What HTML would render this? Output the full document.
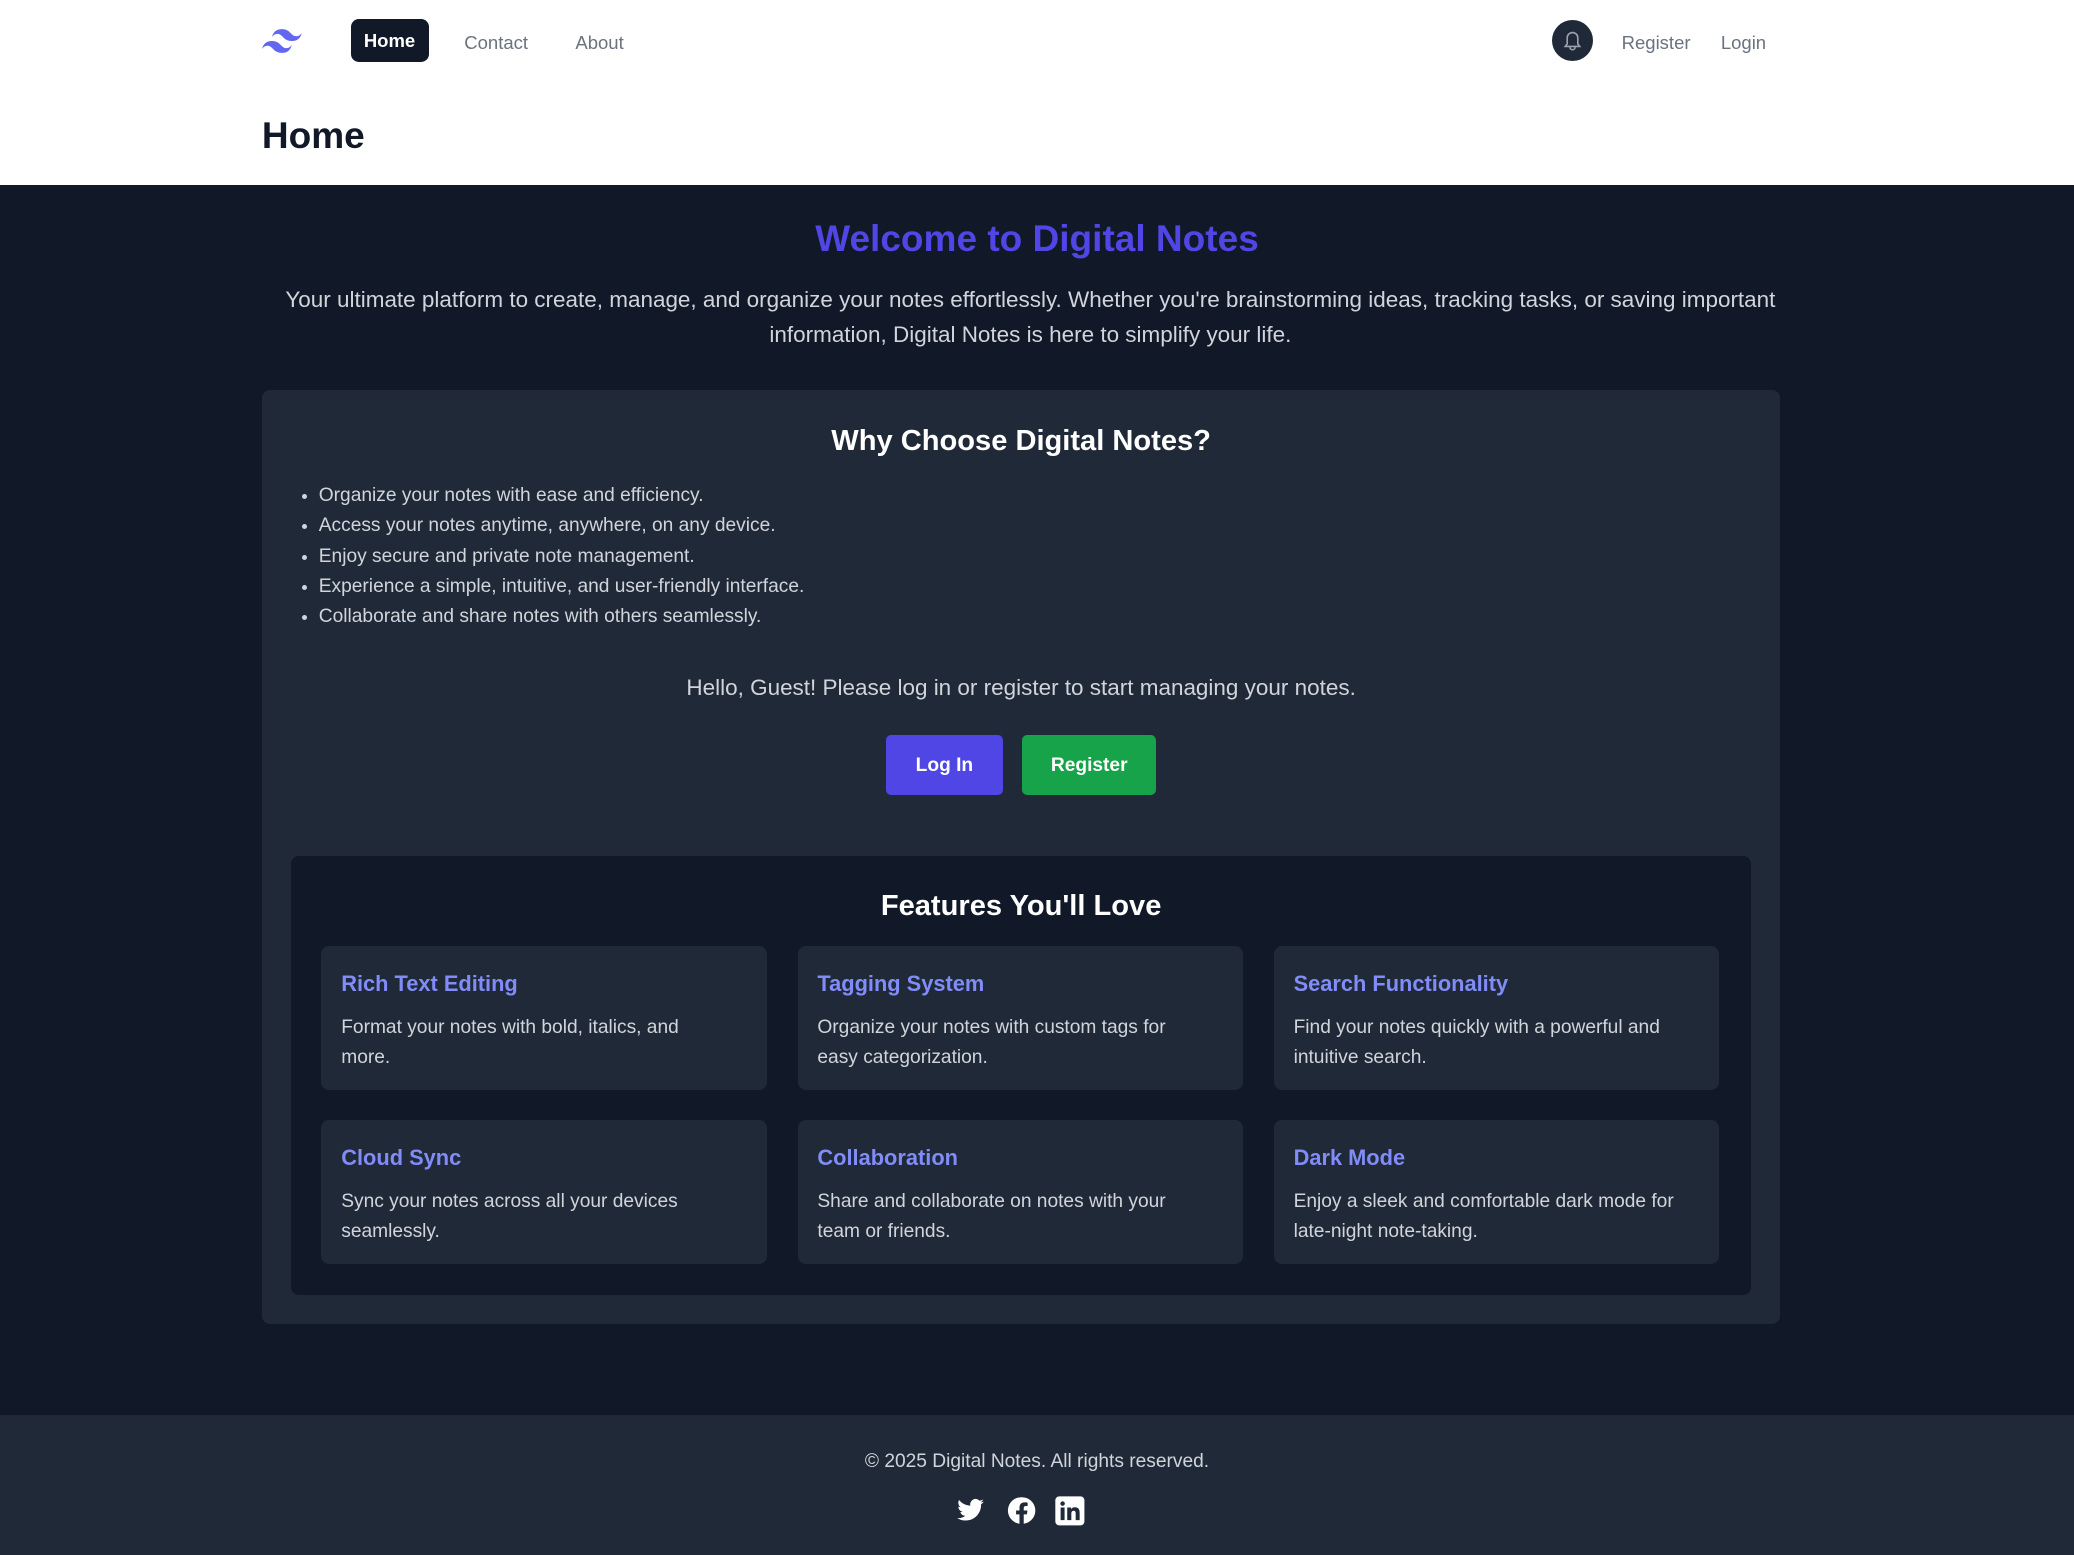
<!DOCTYPE html>
<html><head><meta charset="utf-8"><style>
html{zoom:1.3227}
*{box-sizing:border-box;margin:0;padding:0}
body{width:1568px;font-family:"Liberation Sans",sans-serif;background:#111827;color:#e5e7eb}
.nav{background:#fff;height:64px;position:relative}
.logo{position:absolute;left:198px;top:21px}
.nav a{position:absolute;font-size:14px;color:#6b7280;top:24px}
.home{left:265px;top:14px!important;width:59px;height:33px;background:#111827;color:#fff!important;border-radius:6px;font-weight:bold;text-align:center;line-height:33px}
.hdr{background:#fff;height:76px;position:relative}
.hdr h1{position:absolute;left:198px;top:22px;font-size:28px;color:#111827;font-weight:bold}
.bell{position:absolute;left:1173px;top:15px;width:31px;height:31px;border-radius:50%;background:#1f2937}
main{height:930px;position:relative}
.t{position:absolute;left:0;width:1568px;text-align:center}
.card{position:absolute;left:198px;top:155px;width:1148px;height:706px;background:#1f2937;border-radius:6px}
ul{position:absolute;left:43px;top:69px;font-size:14.5px;line-height:22.7px;color:#d1d5db}
.btn{position:absolute;top:261px;height:45px;line-height:47px;color:#fff;font-weight:bold;font-size:14.5px;text-align:center;border-radius:4px}
.inner{position:absolute;left:22px;top:352px;width:1104px;height:332px;background:#111827;border-radius:6px}
.f{position:absolute;width:337px;height:109px;background:#1f2937;border-radius:6px;padding:19px 30px 16px 15px}
.f h3{font-size:16.5px;color:#818cf8;font-weight:bold;margin-bottom:12px}
.f p{font-size:14.5px;line-height:22.7px;color:#d1d5db}
footer{background:#1f2937;height:106px;position:relative}
</style></head><body>
<div class="nav">
<svg class="logo" width="30" height="20" viewBox="0 0 54 33"><path fill="#6366f1" d="M27 0c-7.2 0-11.7 3.6-13.5 10.8 2.7-3.600 5.85-4.950 9.45-4.050 2.05.51 3.52 2 5.14 3.65C30.7 13.08 33.730 16.2 40.5 16.2c7.2 0 11.7-3.6 13.5-10.8-2.7 3.6-5.85 4.95-9.45 4.05-2.05-.51-3.52-2-5.14-3.65C36.78 3.12 33.77 0 27 0zM13.5 16.2C6.3 16.2 1.8 19.8 0 27c2.7-3.6 5.85-4.95 9.45-4.05 2.05.51 3.52 2 5.14 3.65 2.63 2.68 5.66 5.8 12.41 5.8 7.2 0 11.7-3.6 13.5-10.8-2.7 3.6-5.85 4.95-9.45 4.05-2.05-.51-3.52-2-5.14-3.650-2.63-2.68-5.66-5.8-12.41-5.8z"/></svg>
<a class="home">Home</a><a style="left:351px">Contact</a><a style="left:435px">About</a>
<div class="bell"><svg width="31" height="31" viewBox="0 0 31 31"><path d="M10 20h11l-1.5-2v-4.5a4 4 0 0 0-8 0V18zM13.5 20.5a2 2 0 0 0 4 0" fill="none" stroke="#9ca3af" stroke-width="1.2"/></svg></div>
<a style="left:1226px">Register</a><a style="left:1301px">Login</a>
</div>
<div class="hdr"><h1>Home</h1></div>
<main>
<div class="t" style="top:24px;font-size:28px;font-weight:bold;color:#4f46e5">Welcome to Digital Notes</div>
<div class="t" style="top:73px;font-size:17px;line-height:26.5px;color:#d1d5db;padding:0 200px 0 190px">Your ultimate platform to create, manage, and organize your notes effortlessly. Whether you're brainstorming ideas, tracking tasks, or saving important information, Digital Notes is here to simplify your life.</div>
<div class="card">
<div class="t" style="width:1148px;top:26px;font-size:22px;font-weight:bold;color:#fff">Why Choose Digital Notes?</div>
<ul><li>Organize your notes with ease and efficiency.</li><li>Access your notes anytime, anywhere, on any device.</li><li>Enjoy secure and private note management.</li><li>Experience a simple, intuitive, and user-friendly interface.</li><li>Collaborate and share notes with others seamlessly.</li></ul>
<div class="t" style="width:1148px;top:215px;font-size:17px;color:#d1d5db">Hello, Guest! Please log in or register to start managing your notes.</div>
<div class="btn" style="left:472px;width:88px;background:#4f46e5">Log In</div>
<div class="btn" style="left:575px;width:101px;background:#16a34a">Register</div>
<div class="inner">
<div class="t" style="width:1104px;top:26px;font-size:22px;font-weight:bold;color:#fff">Features You'll Love</div>
<div class="f" style="left:23px;top:68px"><h3>Rich Text Editing</h3><p>Format your notes with bold, italics, and more.</p></div>
<div class="f" style="left:383px;top:68px"><h3>Tagging System</h3><p>Organize your notes with custom tags for easy categorization.</p></div>
<div class="f" style="left:743px;top:68px"><h3>Search Functionality</h3><p>Find your notes quickly with a powerful and intuitive search.</p></div>
<div class="f" style="left:23px;top:200px"><h3>Cloud Sync</h3><p>Sync your notes across all your devices seamlessly.</p></div>
<div class="f" style="left:383px;top:200px"><h3>Collaboration</h3><p>Share and collaborate on notes with your team or friends.</p></div>
<div class="f" style="left:743px;top:200px"><h3>Dark Mode</h3><p>Enjoy a sleek and comfortable dark mode for late-night note-taking.</p></div>
</div>
</div>
</main>
<footer>
<div class="t" style="top:27px;font-size:14.5px;color:#d1d5db">© 2025 Digital Notes. All rights reserved.</div>
<svg style="position:absolute;left:723px;top:61px" width="22" height="22" viewBox="0 0 24 24"><path fill="#fff" d="M23 4.6a9 9 0 0 1-2.6.7 4.5 4.5 0 0 0 2-2.5 9 9 0 0 1-2.9 1.1 4.5 4.5 0 0 0-7.7 4.1A12.8 12.8 0 0 1 2.5 3.3a4.5 4.5 0 0 0 1.4 6 4.5 4.5 0 0 1-2-.6 4.5 4.5 0 0 0 3.6 4.4 4.5 4.5 0 0 1-2 .1 4.5 4.5 0 0 0 4.2 3.1A9 9 0 0 1 1 18.2 12.8 12.8 0 0 0 7.9 20.2c8.3 0 12.8-6.9 12.8-12.8v-.6A9 9 0 0 0 23 4.6z"/></svg>
<svg style="position:absolute;left:761px;top:61px" width="22" height="22" viewBox="0 0 24 24"><path fill="#fff" d="M12 1a11 11 0 0 0-1.7 21.9v-7.7H7.5V12h2.8V9.6c0-2.8 1.6-4.3 4.2-4.3 1.2 0 2.5.2 2.5.2v2.7h-1.4c-1.4 0-1.8.9-1.8 1.8V12h3.1l-.5 3.2h-2.6v7.7A11 11 0 0 0 12 1z"/></svg>
<svg style="position:absolute;left:797px;top:60px" width="24" height="24" viewBox="0 0 24 24"><rect x="1" y="1" width="22" height="22" rx="3" fill="#fff"/><path fill="#1f2937" d="M5 9.5h3V19H5zM6.5 4.8a1.7 1.7 0 1 1 0 3.4 1.7 1.7 0 0 1 0-3.4zM10 9.5h2.9v1.3c.4-.8 1.4-1.5 2.9-1.5 3 0 3.6 2 3.6 4.6V19h-3v-4.6c0-1.1 0-2.5-1.5-2.5s-1.8 1.2-1.8 2.4V19H10z"/></svg>
</footer>
</body></html>
